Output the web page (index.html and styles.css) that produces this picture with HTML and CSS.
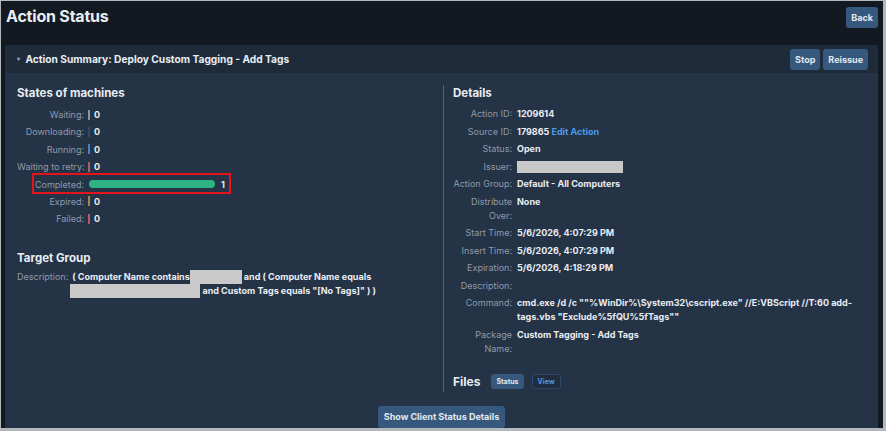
FILE: index.html
```html
<!DOCTYPE html>
<html lang="en">
<head>
    <meta charset="UTF-8">
    <meta name="viewport" content="width=device-width, initial-scale=1.0">
    <title>Action Status</title>
    <link rel="stylesheet" href="styles.css">
</head>
<body>
    <div id="screen">
        <div class="top-bar">
            <h1 class="page-title">Action Status</h1>
            <button class="btn">Back</button>
        </div>

        <div class="panel">
            <div class="panel-head">
                <span class="panel-title"><span class="caret">&#9662;</span> Action Summary: Deploy Custom Tagging - Add Tags</span>
                <div class="btn-group">
                    <button class="btn">Stop</button>
                    <button class="btn">Reissue</button>
                </div>
            </div>

            <div class="panel-body">
                <div class="col col-left">
                    <h2 class="section-title">States of machines</h2>
                    <div class="states">
                        <div class="state"><span class="lbl">Waiting:</span><span class="tick t-waiting"></span><span class="val">0</span></div>
                        <div class="state"><span class="lbl">Downloading:</span><span class="tick t-downloading"></span><span class="val">0</span></div>
                        <div class="state"><span class="lbl">Running:</span><span class="tick t-running"></span><span class="val">0</span></div>
                        <div class="state"><span class="lbl">Waiting to retry:</span><span class="tick t-retry"></span><span class="val">0</span></div>
                        <div class="state highlight"><span class="lbl">Completed:</span><span class="bar"></span><span class="val">1</span></div>
                        <div class="state"><span class="lbl">Expired:</span><span class="tick t-expired"></span><span class="val">0</span></div>
                        <div class="state"><span class="lbl">Failed:</span><span class="tick t-failed"></span><span class="val">0</span></div>
                    </div>

                    <h2 class="section-title target-title">Target Group</h2>
                    <div class="target">
                        <span class="lbl">Description:</span>
                        <span class="val">( Computer Name contains<span class="redact r-short"></span> and ( Computer Name equals <span class="redact r-long"></span> and Custom Tags equals "[No Tags]" ) )</span>
                    </div>
                </div>

                <div class="col col-right">
                    <h2 class="section-title">Details</h2>
                    <div class="details">
                        <div class="detail"><span class="lbl">Action ID:</span><span class="val">1209614</span></div>
                        <div class="detail"><span class="lbl">Source ID:</span><span class="val">179865 <a href="#" class="link">Edit Action</a></span></div>
                        <div class="detail"><span class="lbl">Status:</span><span class="val">Open</span></div>
                        <div class="detail"><span class="lbl">Issuer:</span><span class="val"><span class="redact r-issuer"></span></span></div>
                        <div class="detail"><span class="lbl">Action Group:</span><span class="val">Default - All Computers</span></div>
                        <div class="detail"><span class="lbl">Distribute Over:</span><span class="val">None</span></div>
                        <div class="detail"><span class="lbl">Start Time:</span><span class="val">5/6/2026, 4:07:29 PM</span></div>
                        <div class="detail"><span class="lbl">Insert Time:</span><span class="val">5/6/2026, 4:07:29 PM</span></div>
                        <div class="detail"><span class="lbl">Expiration:</span><span class="val">5/6/2026, 4:18:29 PM</span></div>
                        <div class="detail"><span class="lbl">Description:</span><span class="val"></span></div>
                        <div class="detail"><span class="lbl">Command:</span><span class="val">cmd.exe /d /c ""%WinDir%\System32\cscript.exe" //E:VBScript //T:60 add-tags.vbs "Exclude%5fQU%5fTags""</span></div>
                        <div class="detail"><span class="lbl">Package Name:</span><span class="val">Custom Tagging - Add Tags</span></div>
                    </div>

                    <div class="files">
                        <h2 class="section-title">Files</h2>
                        <button class="btn btn-small">Status</button>
                        <button class="btn btn-small btn-outline">View</button>
                    </div>
                </div>
            </div>

            <div class="panel-foot">
                <button class="btn">Show Client Status Details</button>
            </div>
        </div>
    </div>
</body>
</html>
```

FILE: styles.css
```css
html, body{
    margin: 0;
    padding: 0;
    background: #b4b8bc;
}
#screen{
    width: 886px;
    height: 431px;
    box-sizing: border-box;
    border: 1px solid #b4b8bc;
    border-right-width: 3px;
    border-bottom-width: 3px;
    padding: 0 5px 0 4px;
    background: #131920;
    overflow: hidden;
    font-family: Inter, "Liberation Sans", sans-serif;
    color: #e9edf2;
}

/* top bar */
.top-bar{
    display: flex;
    justify-content: space-between;
    align-items: flex-start;
    padding-top: 6px;
    height: 38px;
}
.page-title{
    margin: 0;
    padding-left: 1px;
    font-size: 16px;
    font-weight: 700;
    line-height: 18px;
    letter-spacing: -0.2px;
}
.btn{
    font-family: inherit;
    font-size: 9px;
    font-weight: 700;
    color: #e3e9f0;
    background: #35587c;
    border: none;
    border-radius: 3px;
    height: 21px;
    padding: 0 5px;
    cursor: pointer;
}
.btn:hover{
    background: #3d6590;
}

/* panel */
.panel{
    background: #243346;
    height: 400px;
}
.panel-head{
    display: flex;
    justify-content: space-between;
    align-items: center;
    height: 28px;
    padding: 0 10px 0 12px;
    background: #1e2b3b;
}
.panel-title{
    font-size: 10.2px;
    font-weight: 700;
}
.caret{
    font-size: 6px;
    color: #9aa6b4;
    vertical-align: 2px;
    margin-right: 3px;
}
.btn-group{
    display: flex;
    gap: 3px;
}

.panel-body{
    display: grid;
    grid-template-columns: 438px 1fr;
    padding-top: 12px;
}
.col-left{
    padding-left: 12px;
}
.col-right{
    border-left: 1px solid #56606c;
    padding: 0 20px 2px 9px;
}
.section-title{
    margin: 0 0 6px 0;
    font-size: 11.5px;
    line-height: 16px;
    font-weight: 700;
}
.lbl{
    color: #8f9bab;
    font-weight: 400;
}
.val{
    font-weight: 700;
}

/* states */
.states{
    display: flex;
    flex-direction: column;
    gap: 2.4px;
    font-size: 9px;
    line-height: 15px;
}
.state{
    display: flex;
    align-items: center;
    position: relative;
}
.state .lbl{
    width: 67px;
    text-align: right;
    margin-right: 4px;
    white-space: nowrap;
}
.tick{
    width: 2px;
    height: 10px;
    margin-right: 4px;
    background: #8f9bab;
}
.t-waiting{ background: #8e96a2; }
.t-downloading{ background: #2e4a68; }
.t-running{ background: #4c7fbd; }
.t-retry{ background: #a8606e; }
.t-expired{ background: #a98247; }
.t-failed{ background: #b85866; }
.bar{
    width: 126px;
    height: 8px;
    margin: 0 6px 0 1px;
    border-radius: 4px;
    background: #2db482;
}
.highlight::after{
    content: "";
    position: absolute;
    left: 15px;
    top: -4px;
    width: 199px;
    height: 21px;
    box-sizing: border-box;
    border: 2px solid #e3141c;
}

/* target group */
.target-title{
    margin-top: 24px;
    margin-bottom: 4px;
}
.target{
    display: flex;
    gap: 4px;
    font-size: 9px;
    line-height: 14px;
}
.target .val{
    width: 312px;
}
.redact{
    display: inline-block;
    vertical-align: top;
    height: 14px;
    background: #c9c9c9;
}
.r-short{ width: 52px; }
.r-long{ width: 130px; margin-left: -2px; }
.r-issuer{ width: 106px; height: 12px; vertical-align: middle; }

/* details */
.details{
    display: flex;
    flex-direction: column;
    gap: 3.5px;
    font-size: 9px;
    line-height: 14px;
}
.detail{
    display: flex;
    gap: 5px;
}
.detail .lbl{
    flex: 0 0 59px;
    text-align: right;
}
.link{
    color: #4b9be8;
    text-decoration: none;
}

/* files */
.files{
    display: flex;
    align-items: center;
    gap: 8px;
    margin-top: 18px;
}
.files .section-title{
    margin: 0 3px 0 0;
    font-size: 12px;
}
.btn-small{
    height: 15px;
    font-size: 7px;
    padding: 0 5px;
}
.btn-outline{
    background: #1f2d3f;
    border: 1px solid #2e4968;
    color: #4b9be8;
}

.panel-foot{
    display: flex;
    justify-content: center;
    padding-top: 14px;
}
.panel-foot .btn{
    height: 22px;
    padding: 0 6px;
}
```
